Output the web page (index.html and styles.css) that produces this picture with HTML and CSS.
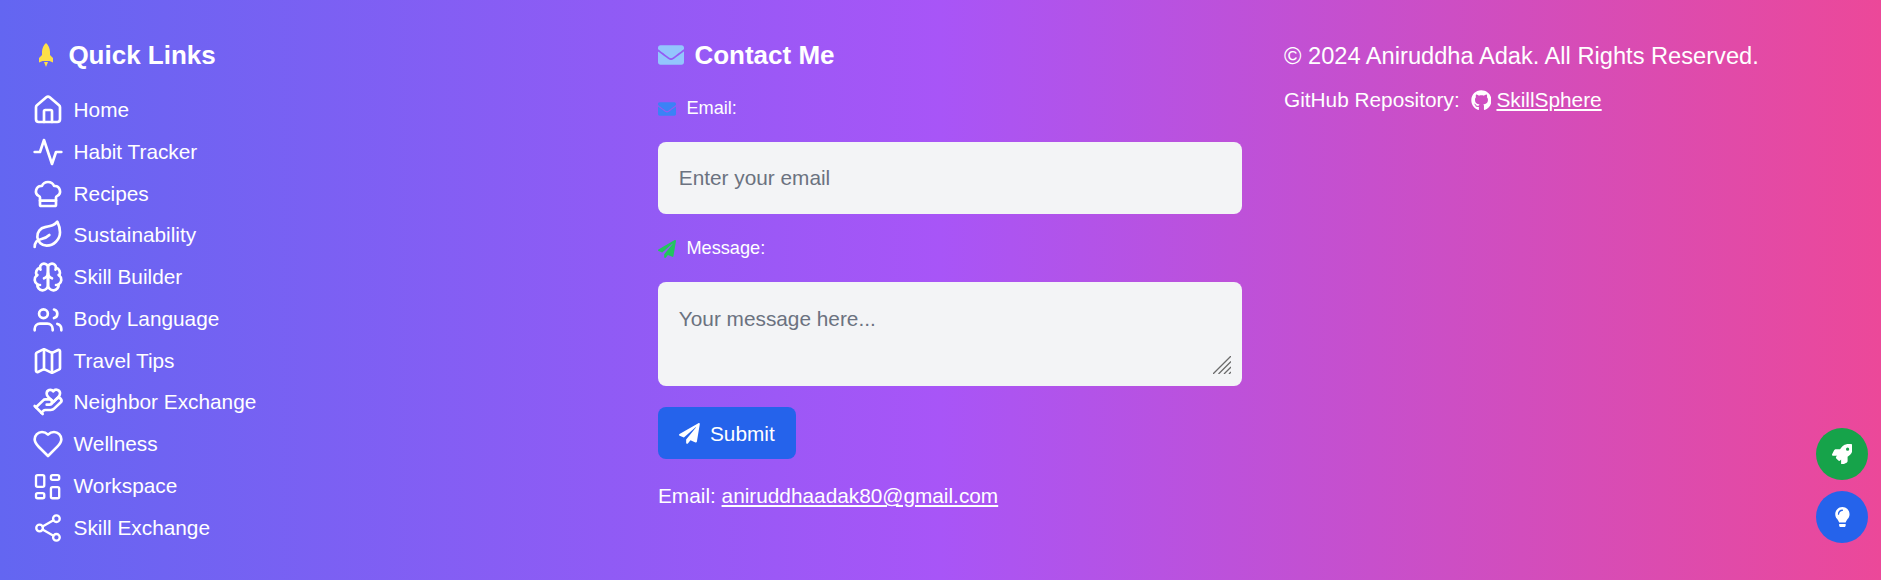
FILE: index.html
```html
<!DOCTYPE html>
<html lang="en">

<head>
    <meta charset="UTF-8">
    <meta name="viewport" content="width=device-width, initial-scale=1.0">
    <title>SkillSphere footer</title>
    <link rel="stylesheet" href="styles.css">
</head>

<body>
    <footer class="footer">
        <section class="links">
            <h2 class="heading">
                <svg class="heading-rocket" viewBox="0 0 16 24"><path d="M8 0C5.5 2 4 5.5 4 9v3L1 15v4.5l3.5-1.5h7l3.5 1.5V15l-3-3V9C12 5.5 10.5 2 8 0Z"/><path d="M6 19h4l-2 5Z"/></svg>
                Quick Links
            </h2>
            <ul class="link-list">
                <li><svg class="link-icon" viewBox="0 0 24 24"><path d="M15 21v-8a1 1 0 0 0-1-1h-4a1 1 0 0 0-1 1v8"/><path d="M3 10a2 2 0 0 1 .709-1.528l7-5.999a2 2 0 0 1 2.582 0l7 5.999A2 2 0 0 1 21 10v9a2 2 0 0 1-2 2H5a2 2 0 0 1-2-2z"/></svg>Home</li>
                <li><svg class="link-icon" viewBox="0 0 24 24"><polyline points="22 12 18 12 15 21 9 3 6 12 2 12"/></svg>Habit Tracker</li>
                <li><svg class="link-icon" viewBox="0 0 24 24"><path d="M17 21a1 1 0 0 0 1-1v-5.35c0-.457.316-.844.727-1.041a4 4 0 0 0-2.134-7.589 5 5 0 0 0-9.186 0 4 4 0 0 0-2.134 7.588c.411.198.727.585.727 1.041V20a1 1 0 0 0 1 1Z"/><path d="M6 17h12"/></svg>Recipes</li>
                <li><svg class="link-icon" viewBox="0 0 24 24"><path d="M11 20A7 7 0 0 1 9.8 6.1C15.5 5 17 4.48 19 2c1 2 2 4.18 2 8 0 5.5-4.78 10-10 10Z"/><path d="M2 21c0-3 1.85-5.36 5.08-6C9.5 14.52 12 13 13 12"/></svg>Sustainability</li>
                <li><svg class="link-icon" viewBox="0 0 24 24"><path d="M12 5a3 3 0 1 0-5.997.125 4 4 0 0 0-2.526 5.77 4 4 0 0 0 .556 6.588A4 4 0 1 0 12 18Z"/><path d="M12 5a3 3 0 1 1 5.997.125 4 4 0 0 1 2.526 5.77 4 4 0 0 1-.556 6.588A4 4 0 1 1 12 18Z"/><path d="M15 13a4.5 4.5 0 0 1-3-4 4.5 4.5 0 0 1-3 4"/><path d="M17.599 6.5a3 3 0 0 0 .399-1.375"/><path d="M6.003 5.125A3 3 0 0 0 6.401 6.5"/><path d="M3.477 10.896a4 4 0 0 1 .585-.396"/><path d="M19.938 10.5a4 4 0 0 1 .585.396"/><path d="M6 18a4 4 0 0 1-1.967-.516"/><path d="M19.967 17.484A4 4 0 0 1 18 18"/></svg>Skill Builder</li>
                <li><svg class="link-icon" viewBox="0 0 24 24"><path d="M15.5 20.5v-1a4 4 0 0 0-4-4H6a4 4 0 0 0-4 4v1"/><circle cx="8.6" cy="8.1" r="3.3"/><path d="M22 20.5v-1a4 4 0 0 0-3-3.8"/><path d="M16.5 4.9a3.3 3.3 0 0 1 0 6.4"/></svg>Body Language</li>
                <li><svg class="link-icon" viewBox="0 0 24 24"><path d="M14.106 5.553a2 2 0 0 0 1.788 0l3.659-1.83A1 1 0 0 1 21 4.619v12.764a1 1 0 0 1-.553.894l-4.553 2.277a2 2 0 0 1-1.788 0l-4.212-2.106a2 2 0 0 0-1.788 0l-3.659 1.83A1 1 0 0 1 3 19.381V6.618a1 1 0 0 1 .553-.894l4.553-2.277a2 2 0 0 1 1.788 0z"/><path d="M15 5.764v15"/><path d="M9 3.236v15"/></svg>Travel Tips</li>
                <li><svg class="link-icon" viewBox="0 0 24 24"><path d="M11 14h2a2 2 0 1 0 0-4h-3c-.6 0-1.1.2-1.4.6L3 16"/><path d="m7 20 1.6-1.4c.3-.4.8-.6 1.4-.6h4c1.1 0 2.1-.4 2.8-1.2l4.6-4.4a2 2 0 0 0-2.75-2.91l-4.2 3.9"/><path d="m2 15 6 6"/><path d="M19.5 8.5c.7-.7 1.5-1.6 1.5-2.7A2.73 2.73 0 0 0 16 4a2.78 2.78 0 0 0-5 1.8c0 1.2.8 2 1.5 2.8L16 12Z"/></svg>Neighbor Exchange</li>
                <li><svg class="link-icon" viewBox="0 0 24 24"><path d="M19 14c1.49-1.46 3-3.21 3-5.5A5.5 5.5 0 0 0 16.5 3c-1.76 0-3 .5-4.5 2-1.5-1.5-2.74-2-4.5-2A5.5 5.5 0 0 0 2 8.5c0 2.3 1.5 4.05 3 5.5l7 7Z"/></svg>Wellness</li>
                <li><svg class="link-icon link-icon-fine" viewBox="0 0 24 24"><rect width="6.2" height="8.8" x="3" y="3.8" rx="1.2"/><rect width="6.2" height="3.6" x="14.2" y="3.8" rx="1.2"/><rect width="6.2" height="8.4" x="14.2" y="12.8" rx="1.2"/><rect width="6.2" height="3.8" x="3" y="17.4" rx="1.2"/></svg>Workspace</li>
                <li><svg class="link-icon link-icon-fine" viewBox="0 0 24 24"><circle cx="18.3" cy="5" r="2.5"/><circle cx="5.7" cy="12" r="2.5"/><circle cx="18.3" cy="19" r="2.5"/><line x1="7.9" x2="16.1" y1="13.2" y2="17.8"/><line x1="16.1" x2="7.9" y1="6.2" y2="10.8"/></svg>Skill Exchange</li>
            </ul>
        </section>

        <section class="contact">
            <h2 class="heading">
                <svg class="heading-mail" viewBox="0 0 512 512"><path d="M502.3 190.8c3.9-3.1 9.7-.2 9.7 4.7V400c0 26.5-21.5 48-48 48H48c-26.5 0-48-21.5-48-48V195.6c0-5 5.7-7.8 9.7-4.7 22.4 17.4 52.1 39.5 154.1 113.6 21.1 15.4 56.7 47.8 92.2 47.6 35.7.3 72-32.8 92.3-47.6 102-74.1 131.6-96.3 154-113.7zM256 320c23.2.4 56.6-29.2 73.4-41.4 132.7-96.3 142.8-104.7 173.4-128.7 5.8-4.5 9.2-11.5 9.2-18.9v-19c0-26.5-21.5-48-48-48H48C21.5 64 0 85.5 0 112v19c0 7.4 3.4 14.3 9.2 18.9 30.6 23.9 40.7 32.4 173.4 128.7 16.8 12.2 50.2 41.8 73.4 41.4z"/></svg>
                Contact Me
            </h2>
            <form class="contact-form">
                <label class="field-label" for="email">
                    <svg class="label-mail" viewBox="0 0 512 512"><path d="M502.3 190.8c3.9-3.1 9.7-.2 9.7 4.7V400c0 26.5-21.5 48-48 48H48c-26.5 0-48-21.5-48-48V195.6c0-5 5.7-7.8 9.7-4.7 22.4 17.4 52.1 39.5 154.1 113.6 21.1 15.4 56.7 47.8 92.2 47.6 35.7.3 72-32.8 92.3-47.6 102-74.1 131.6-96.3 154-113.7zM256 320c23.2.4 56.6-29.2 73.4-41.4 132.7-96.3 142.8-104.7 173.4-128.7 5.8-4.5 9.2-11.5 9.2-18.9v-19c0-26.5-21.5-48-48-48H48C21.5 64 0 85.5 0 112v19c0 7.4 3.4 14.3 9.2 18.9 30.6 23.9 40.7 32.4 173.4 128.7 16.8 12.2 50.2 41.8 73.4 41.4z"/></svg>
                    Email:
                </label>
                <input class="field" type="email" id="email" placeholder="Enter your email">
                <label class="field-label" for="message">
                    <svg class="label-plane" viewBox="0 0 512 512"><path d="M476 3.2L12.5 270.6c-18.1 10.4-15.8 35.6 2.2 43.2L121 358.4l287.3-253.2c5.5-4.9 13.3 2.6 8.6 8.3L176 407v80.5c0 23.6 28.5 32.9 42.5 15.8L282 426l124.6 52.2c14.2 6 30.4-2.9 33-18.2l72-432C515 7.8 493.3-6.8 476 3.2z"/></svg>
                    Message:
                </label>
                <div class="message-box">
                    <textarea class="field field-message" id="message" placeholder="Your message here..."></textarea>
                    <svg class="grip" viewBox="0 0 18 18"><path d="M0 18 18 0M5.5 18 18 5.5M11 18l7-7M16 18l2-2"/></svg>
                </div>
                <button class="submit" type="button">
                    <svg class="submit-icon" viewBox="0 0 512 512"><path d="M476 3.2L12.5 270.6c-18.1 10.4-15.8 35.6 2.2 43.2L121 358.4l287.3-253.2c5.5-4.9 13.3 2.6 8.6 8.3L176 407v80.5c0 23.6 28.5 32.9 42.5 15.8L282 426l124.6 52.2c14.2 6 30.4-2.9 33-18.2l72-432C515 7.8 493.3-6.8 476 3.2z"/></svg>
                    Submit
                </button>
            </form>
            <p class="contact-mail">Email: <a href="#">aniruddhaadak80@gmail.com</a></p>
        </section>

        <section class="about">
            <p class="copyright">© 2024 Aniruddha Adak. All Rights Reserved.</p>
            <p class="repo">
                GitHub Repository:
                <svg class="repo-icon" viewBox="0 0 496 512"><path d="M165.9 397.4c0 2-2.3 3.6-5.2 3.6-3.3 0-5.6-1.6-5.6-3.6 0-2 2.3-3.6 5.2-3.6 3-.3 5.6 1.3 5.6 3.6zm-31.1-4.5c-.7 2 1.3 4.3 4.3 4.9 2.6 1 5.6 0 6.2-2s-1.3-4.3-4.3-5.2c-2.6-.7-5.5.3-6.2 2.3zm44.2-1.7c-2.9.7-4.9 2.6-4.6 4.9.3 2 2.9 3.3 5.9 2.6 2.9-.7 4.9-2.6 4.6-4.6-.3-1.9-3-3.2-5.9-2.9zM244.8 8C106.1 8 0 113.3 0 252c0 110.9 69.8 205.8 169.5 239.2 12.8 2.3 17.3-5.6 17.3-12.1 0-6.2-.3-40.4-.3-61.4 0 0-70 15-84.7-29.8 0 0-11.4-29.1-27.8-36.6 0 0-22.9-15.7 1.6-15.4 0 0 24.9 2 38.6 25.8 21.9 38.6 58.6 27.5 72.9 20.9 2.3-16 8.8-27.1 16-33.7-55.9-6.2-112.3-14.3-112.3-110.5 0-27.5 7.6-41.3 23.6-58.9-2.6-6.5-11.1-33.3 2.6-67.9 20.9-6.5 69 27 69 27 20-5.6 41.5-8.5 62.8-8.5s42.8 2.9 62.8 8.5c0 0 48.1-33.6 69-27 13.7 34.7 5.2 61.4 2.6 67.9 16 17.7 25.8 31.5 25.8 58.9 0 96.5-58.9 104.2-114.8 110.5 9.2 7.9 17 22.9 17 46.4 0 33.7-.3 75.4-.3 83.6 0 6.5 4.6 14.4 17.3 12.1C428.2 457.8 496 362.9 496 252 496 113.3 383.5 8 244.8 8z"/></svg>
                <a href="#">SkillSphere</a>
            </p>
        </section>
    </footer>

    <div class="fabs">
        <button class="fab fab-green" type="button">
            <svg class="fab-icon" viewBox="0 0 512 512"><path d="M505.12 19.09c-1.19-5.53-6.66-11-12.21-12.18C460.72 0 435.51 0 410.41 0 307.18 0 245.27 55.2 199.05 128H94.84c-16.35.02-35.56 11.88-42.89 26.48L2.52 253.3A28.4 28.4 0 0 0 0 264a24 24 0 0 0 24.01 24h103.81l-22.47 22.47c-11.37 11.36-13 32.26 0 45.25l50.9 50.9c11.16 11.19 32.16 13.16 45.28 0L224 384.16V488a24 24 0 0 0 24 24 28.56 28.56 0 0 0 10.71-2.52l98.73-49.39c14.63-7.3 26.51-26.5 26.51-42.86V312.8c72.6-46.31 128.03-108.41 128.03-211.1.1-25.2.1-50.4-6.86-82.61zM384.04 168a40 40 0 1 1 40.01-40 40.02 40.02 0 0 1-40.01 40z"/></svg>
        </button>
        <button class="fab fab-blue" type="button">
            <svg class="fab-icon" viewBox="0 0 352 512"><path d="M96.06 454.35c.01 6.29 1.87 12.45 5.36 17.69l17.09 25.69a31.99 31.99 0 0 0 26.64 14.28h61.71a31.99 31.99 0 0 0 26.64-14.28l17.09-25.69a31.989 31.989 0 0 0 5.36-17.69l.04-38.35H96.01l.05 38.35zM0 176c0 44.37 16.45 84.85 43.56 115.78 16.52 18.85 42.36 58.23 52.21 91.45.04.26.07.52.11.78h160.24c.04-.26.07-.51.11-.78 9.85-33.22 35.69-72.6 52.21-91.45C335.55 260.85 352 220.37 352 176 352 78.61 272.91-.3 175.45 0 73.44.31 0 82.97 0 176zm176-80c-44.11 0-80 35.89-80 80 0 8.84-7.16 16-16 16s-16-7.16-16-16c0-61.76 50.24-112 112-112 8.84 0 16 7.16 16 16s-7.16 16-16 16z"/></svg>
        </button>
    </div>
</body>

</html>
```

FILE: styles.css
```css
* {
    margin: 0;
    padding: 0;
    box-sizing: border-box;
}

body {
    font-family: "Liberation Sans", Arial, sans-serif;
    color: #fff;
    overflow: hidden;
}

.footer {
    height: 580px;
    padding: 40px 32px 0;
    display: grid;
    grid-template-columns: 584px 584px 584px;
    column-gap: 42px;
    background: linear-gradient(to right, #6366f1, #a855f7, #ec4899);
}

a {
    color: #fff;
}

svg {
    flex-shrink: 0;
    fill: currentColor;
}

.heading {
    display: flex;
    align-items: center;
    gap: 10.4px;
    height: 32px;
    padding-bottom: 2px;
    font-size: 26px;
    font-weight: 700;
}

.heading-rocket {
    width: 16px;
    height: 24px;
    color: #fde047;
    margin-left: 6px;
    margin-right: 4px;
}

.heading-mail {
    width: 26px;
    height: 26px;
    color: #93c5fd;
}

.link-list {
    list-style: none;
    margin-top: 22px;
}

.link-list li {
    display: flex;
    align-items: center;
    gap: 9.6px;
    height: 32px;
    margin-bottom: 9.75px;
    font-size: 20.8px;
}

.link-icon {
    width: 32px;
    height: 32px;
    fill: none;
    stroke: #fff;
    stroke-width: 2;
    stroke-linecap: round;
    stroke-linejoin: round;
}

.link-icon-fine {
    stroke-width: 1.75;
}

.contact-form {
    display: flex;
    flex-direction: column;
    align-items: flex-start;
    margin-top: 24.5px;
}

.field-label {
    display: flex;
    align-items: center;
    gap: 10.4px;
    height: 24px;
    font-size: 18.2px;
}

.label-mail {
    width: 18px;
    height: 18px;
    color: #3b82f6;
}

.label-plane {
    width: 18px;
    height: 18px;
    color: #22c55e;
}

.field {
    display: block;
    width: 100%;
    height: 72.8px;
    margin-top: 21px;
    margin-bottom: 22.5px;
    padding: 21.3px 20.8px 20.3px;
    border: none;
    border-radius: 8px;
    background-color: #f3f4f6;
    color: #1f2937;
    font-family: inherit;
    font-size: 20.8px;
    line-height: 31.2px;
    outline: none;
}

.field::placeholder {
    color: #6b7280;
}

.message-box {
    position: relative;
    width: 100%;
}

.field-message {
    height: 104px;
    margin-bottom: 21.5px;
    resize: none;
}

.grip {
    position: absolute;
    right: 11px;
    bottom: 33.5px;
    width: 18px;
    height: 18px;
    fill: none;
    stroke: #6b6b6b;
    stroke-width: 1.3;
}

.submit {
    display: flex;
    align-items: center;
    gap: 10.4px;
    height: 52px;
    padding: 1px 20.8px 0;
    border: none;
    border-radius: 8px;
    background-color: #2563eb;
    color: #fff;
    font-family: inherit;
    font-size: 20.8px;
}

.submit-icon {
    width: 20.8px;
    height: 20.8px;
}

.contact-mail {
    margin-top: 25px;
    font-size: 20.8px;
}

.copyright {
    height: 32px;
    font-size: 23.65px;
    line-height: 32px;
}

.repo {
    display: flex;
    align-items: center;
    margin-top: 16px;
    font-size: 20.8px;
}

.repo-icon {
    width: 20.8px;
    height: 20.8px;
    margin-left: 11px;
    margin-right: 5px;
}

.fabs {
    position: fixed;
    right: 13px;
    bottom: 37px;
    display: flex;
    flex-direction: column;
    gap: 11px;
}

.fab {
    display: flex;
    align-items: center;
    justify-content: center;
    width: 52px;
    height: 52px;
    border: none;
    border-radius: 50%;
    color: #fff;
}

.fab-green {
    background-color: #16a34a;
}

.fab-blue {
    background-color: #2563eb;
}

.fab-icon {
    width: 20.8px;
    height: 20.8px;
}
```
